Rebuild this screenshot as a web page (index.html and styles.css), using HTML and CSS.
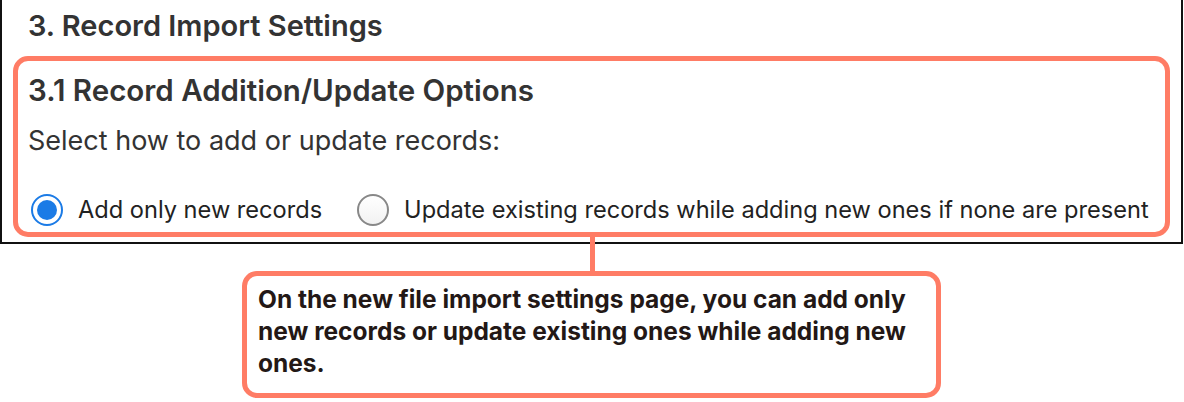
FILE: index.html
```html
<!DOCTYPE html>
<html lang="en">
<head>
<meta charset="utf-8">
<link rel="stylesheet" href="styles.css">
</head>
<body>
<div class="panel">
  <h2 class="title">3. Record Import Settings</h2>
  <div class="highlight">
    <h3 class="subtitle">3.1 Record Addition/Update Options</h3>
    <p class="prompt">Select how to add or update records:</p>
    <div class="options">
      <label class="option"><span class="radio checked"></span><span class="label">Add only new records</span></label>
      <label class="option"><span class="radio"></span><span class="label">Update existing records while adding new ones if none are present</span></label>
    </div>
  </div>
</div>
<div class="callout">
  <p>On the new file import settings page, you can add only new records or update existing ones while adding new ones.</p>
</div>
</body>
</html>
```
FILE: styles.css
```css
* { box-sizing: border-box; }
html, body { margin: 0; padding: 0; background: #fff; }
body {
  width: 1184px;
  height: 402px;
  overflow: hidden;
  font-family: "Inter", "Noto Sans", "Liberation Sans", sans-serif;
  color: #333;
}
.panel {
  width: 1183px;
  border-left: 2px solid #111;
  border-right: 2px solid #111;
  border-bottom: 2px solid #111;
  padding: 8px 11px 5px 11px;
}
.title {
  margin: 0 0 0 15px;
  font-size: 29px;
  font-weight: 600;
  line-height: 36px;
  color: #333;
}
.highlight {
  margin-top: 12px;
  border: 5px solid #ff7c65;
  border-radius: 15px;
  padding: 12px 10px 5px 10px;
}
.subtitle {
  margin: 0;
  font-size: 29.5px;
  font-weight: 600;
  line-height: 34px;
  color: #333;
}
.prompt {
  margin: 17px 0 0 0;
  font-size: 27px;
  line-height: 34px;
}
.options {
  margin-top: 35px;
  display: flex;
  align-items: center;
  gap: 35px;
  height: 34px;
  padding-left: 3px;
}
.option {
  display: flex;
  align-items: center;
  gap: 15px;
  font-size: 23.6px;
  line-height: 34px;
  color: #222;
}
.radio {
  width: 32px;
  height: 32px;
  border-radius: 50%;
  border: 2px solid #888;
  background: linear-gradient(#fff, #f2f2f2);
  position: relative;
  flex: none;
}
.radio.checked {
  border: 2px solid #1b7be6;
  background: #fff;
}
.radio.checked::after {
  content: "";
  position: absolute;
  left: 4px;
  top: 4px;
  width: 20px;
  height: 20px;
  border-radius: 50%;
  background: #1b7be6;
}
.callout {
  position: relative;
  margin: 27px 0 0 242px;
  width: 699px;
  height: 127px;
  border: 5px solid #ff7c65;
  border-radius: 15px;
  padding: 7px 10px 0 11px;
}
.callout::before {
  content: "";
  position: absolute;
  left: 343px;
  top: -42px;
  width: 5px;
  height: 37px;
  background: #ff7c65;
}
.callout p {
  margin: 0;
  font-family: "Inter", "Liberation Sans", sans-serif;
  font-weight: 700;
  font-size: 24.5px;
  line-height: 32px;
  color: #231816;
}
```
